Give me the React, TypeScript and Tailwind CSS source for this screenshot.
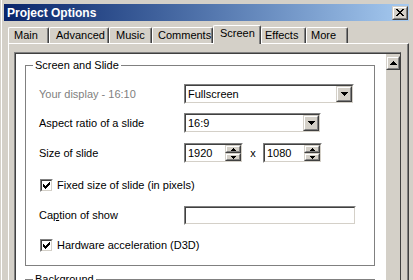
import React from "react";

type BoxProps = { className?: string; children?: React.ReactNode };

// classic 2px sunken edge (edit, combo, checkbox)
function Sunken({ className = "", children }: BoxProps) {
  return (
    <div className={`border border-t-[#808080] border-l-[#808080] border-r-white border-b-white ${className}`}>
      <div className="h-full border border-t-[#404040] border-l-[#404040] border-r-[#d4d0c8] border-b-[#d4d0c8] bg-white flex items-center">
        {children}
      </div>
    </div>
  );
}

// classic 2px raised edge (buttons)
function Raised({ className = "", children }: BoxProps) {
  return (
    <div className={`border border-t-[#d4d0c8] border-l-[#d4d0c8] border-r-[#404040] border-b-[#404040] ${className}`}>
      <div className="h-full border border-t-white border-l-white border-r-[#808080] border-b-[#808080] bg-[#d4d0c8] flex items-center justify-center">
        {children}
      </div>
    </div>
  );
}

function ArrowDown() {
  return (
    <svg width="7" height="4" shapeRendering="crispEdges">
      <rect x="0" y="0" width="7" height="1" fill="#000" />
      <rect x="1" y="1" width="5" height="1" fill="#000" />
      <rect x="2" y="2" width="3" height="1" fill="#000" />
      <rect x="3" y="3" width="1" height="1" fill="#000" />
    </svg>
  );
}

function ArrowUp() {
  return (
    <svg width="7" height="4" shapeRendering="crispEdges">
      <rect x="3" y="0" width="1" height="1" fill="#000" />
      <rect x="2" y="1" width="3" height="1" fill="#000" />
      <rect x="1" y="2" width="5" height="1" fill="#000" />
      <rect x="0" y="3" width="7" height="1" fill="#000" />
    </svg>
  );
}

function SmallArrow({ up }: { up?: boolean }) {
  return (
    <svg width="5" height="3" shapeRendering="crispEdges">
      {up ? (
        <>
          <rect x="2" y="0" width="1" height="1" fill="#000" />
          <rect x="1" y="1" width="3" height="1" fill="#000" />
          <rect x="0" y="2" width="5" height="1" fill="#000" />
        </>
      ) : (
        <>
          <rect x="0" y="0" width="5" height="1" fill="#000" />
          <rect x="1" y="1" width="3" height="1" fill="#000" />
          <rect x="2" y="2" width="1" height="1" fill="#000" />
        </>
      )}
    </svg>
  );
}

function CloseGlyph() {
  const rows: [number, number][][] = [
    [[0, 2], [6, 2]],
    [[1, 2], [5, 2]],
    [[2, 4]],
    [[3, 2]],
    [[2, 4]],
    [[1, 2], [5, 2]],
    [[0, 2], [6, 2]],
  ];
  return (
    <svg width="8" height="7" shapeRendering="crispEdges">
      {rows.map((r, y) => r.map(([x, w], i) => <rect key={`${y}-${i}`} x={x} y={y} width={w} height="1" fill="#000" />))}
    </svg>
  );
}

function CheckGlyph() {
  const rows: [number, number][][] = [
    [[6, 1]],
    [[5, 2]],
    [[0, 1], [4, 3]],
    [[0, 2], [3, 3]],
    [[0, 5]],
    [[1, 3]],
    [[2, 1]],
  ];
  return (
    <svg width="7" height="7" shapeRendering="crispEdges">
      {rows.map((r, y) => r.map(([x, w], i) => <rect key={`${y}-${i}`} x={x} y={y} width={w} height="1" fill="#000" />))}
    </svg>
  );
}

function Combo({ value, className }: { value: string; className: string }) {
  return (
    <Sunken className={`h-[20px] ${className}`}>
      <span className="flex-1 pl-[2px]">{value}</span>
      <Raised className="w-[16px] h-full">
        <ArrowDown />
      </Raised>
    </Sunken>
  );
}

function Spin({ value }: { value: string }) {
  return (
    <Sunken className="w-[59px] h-[20px]">
      <span className="flex-1 pl-[2px]">{value}</span>
      <div className="w-[16px] h-full flex flex-col">
        <Raised className="flex-1">
          <SmallArrow up />
        </Raised>
        <Raised className="flex-1">
          <SmallArrow />
        </Raised>
      </div>
    </Sunken>
  );
}

function CheckRow({ label }: { label: string }) {
  return (
    <div className="h-[13px] flex items-center gap-[4px] ml-px">
      <Sunken className="w-[13px] h-[13px]">
        <div className="flex-1 flex justify-center">
          <CheckGlyph />
        </div>
      </Sunken>
      <span>{label}</span>
    </div>
  );
}

const tabs = [
  { label: "Main", cls: "w-[41px] pl-[5px]" },
  { label: "Advanced", cls: "w-[60px] pl-[6px]" },
  { label: "Music", cls: "w-[43px] pl-[6px]" },
  { label: "Comments", cls: "w-[61px] pl-[5px]" },
  { label: "Screen", cls: "w-[48px] pl-[6px]", active: true },
  { label: "Effects", cls: "w-[45px] pl-[3px]" },
  { label: "More", cls: "w-[42px] pl-[4px]" },
];

export default function App() {
  return (
    <div className="w-[413px] h-[280px] overflow-hidden bg-[#d4d0c8] font-[family-name:'Liberation_Sans',Arial,sans-serif] text-[11px] leading-none text-black">
      <div className="h-full ml-px border-l border-white pl-[2px] pr-[4px] pt-[4px] flex flex-col">
        {/* Title bar */}
        <div className="h-[17px] shrink-0 flex items-center justify-between pl-[3px] pr-px bg-linear-to-r from-[#0a246a] to-[#a6caf0]">
          <span className="text-white font-bold text-[12px]">Project Options</span>
          <Raised className="w-[16px] h-[14px]">
            <CloseGlyph />
          </Raised>
        </div>

        {/* Tabs */}
        <div className="relative z-10 mt-[4px] h-[18px] pl-[4px] flex items-end shrink-0">
          {tabs.map((t) =>
            t.active ? (
              <div
                key={t.label}
                className={`${t.cls} h-[19px] -mb-px bg-[#d4d0c8] border-t border-l border-white border-r border-r-[#404040] rounded-t-[2px] shadow-[inset_-1px_0_0_#808080] flex items-center pb-[3px]`}
              >
                {t.label}
              </div>
            ) : (
              <div
                key={t.label}
                className={`${t.cls} h-[16px] border-t border-l border-white border-r border-r-[#404040] rounded-t-[2px] shadow-[inset_-1px_0_0_#808080] flex items-center`}
              >
                {t.label}
              </div>
            )
          )}
        </div>

        {/* Tab sheet */}
        <div className="flex-1 ml-[4px] border-t border-l border-white border-r border-r-[#404040] shadow-[inset_-1px_0_0_#808080] pt-[8px] pl-[5px] pr-[7px]">
          <div className="h-full border-t border-l border-[#808080] border-r border-r-[#404040]">
            <div className="h-full border-t border-l border-[#404040] flex">
              <div className="flex-1 bg-white pl-[9px] pt-[11px]">
                {/* Screen and Slide group */}
                <div className="relative w-[350px] h-[201px] border border-[#808080] pl-[13px] pt-[18px] flex flex-col">
                  <span className="absolute left-[7px] -top-[7px] bg-white px-[2px] leading-[13px]">Screen and Slide</span>

                  <div className="h-[20px] flex items-center">
                    <span className="w-[145px] text-[#808080]">Your display - 16:10</span>
                    <Combo value="Fullscreen" className="w-[170px]" />
                  </div>

                  <div className="mt-[9px] h-[20px] flex items-center">
                    <span className="w-[145px]">Aspect ratio of a slide</span>
                    <Combo value="16:9" className="w-[137px]" />
                  </div>

                  <div className="mt-[10px] h-[20px] flex items-center">
                    <span className="w-[145px]">Size of slide</span>
                    <Spin value="1920" />
                    <span className="w-[20px] text-center">x</span>
                    <Spin value="1080" />
                  </div>

                  <div className="mt-[16px]">
                    <CheckRow label="Fixed size of slide (in pixels)" />
                  </div>

                  <div className="mt-[14px] h-[19px] flex items-center">
                    <span className="w-[145px]">
                      Ca<span className="underline">p</span>tion of show
                    </span>
                    <Sunken className="w-[172px] h-[19px]" />
                  </div>

                  <div className="mt-[14px]">
                    <CheckRow label="Hardware acceleration (D3D)" />
                  </div>
                </div>

                {/* Background group (cut off) */}
                <div className="relative mt-[13px] w-[350px] h-[100px] border border-[#808080]">
                  <span className="absolute left-[7px] -top-[7px] bg-white px-[2px] leading-[13px]">Background</span>
                </div>
              </div>

              {/* Scrollbar */}
              <div className="w-[15px] bg-[#d4d0c8] border-l border-white">
                <Raised className="mt-[2px] h-[14px]">
                  <ArrowUp />
                </Raised>
              </div>
            </div>
          </div>
        </div>
      </div>
    </div>
  );
}
